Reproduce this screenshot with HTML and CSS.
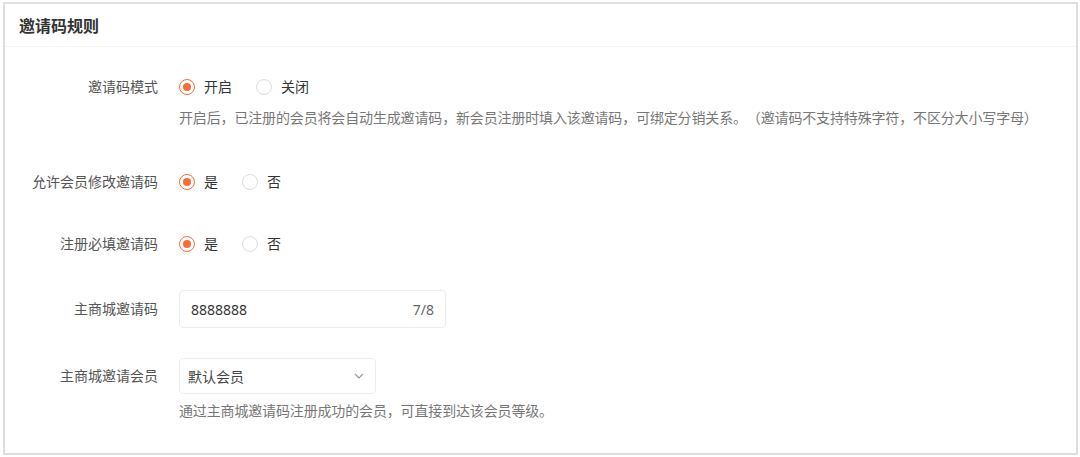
FILE: index.html
```html
<!DOCTYPE html>
<html lang="zh-CN">
<head>
<meta charset="utf-8">
<title>邀请码规则</title>
<link rel="stylesheet" href="styles.css">
</head>
<body>
<div class="card">
  <div class="card-header">邀请码规则</div>
  <div class="form">
    <div class="item item-help">
      <div class="row">
        <div class="label">邀请码模式</div>
        <div class="control">
          <label class="radio"><span class="dot checked"></span><span class="rtext">开启</span></label>
          <label class="radio"><span class="dot"></span><span class="rtext">关闭</span></label>
        </div>
      </div>
      <div class="help">开启后，已注册的会员将会自动生成邀请码，新会员注册时填入该邀请码，可绑定分销关系。（邀请码不支持特殊字符，不区分大小写字母）</div>
    </div>
    <div class="item">
      <div class="row">
        <div class="label">允许会员修改邀请码</div>
        <div class="control">
          <label class="radio"><span class="dot checked"></span><span class="rtext">是</span></label>
          <label class="radio"><span class="dot"></span><span class="rtext">否</span></label>
        </div>
      </div>
    </div>
    <div class="item">
      <div class="row">
        <div class="label">注册必填邀请码</div>
        <div class="control">
          <label class="radio"><span class="dot checked"></span><span class="rtext">是</span></label>
          <label class="radio"><span class="dot"></span><span class="rtext">否</span></label>
        </div>
      </div>
    </div>
    <div class="item">
      <div class="row">
        <div class="label">主商城邀请码</div>
        <div class="control">
          <div class="input">
            <span class="value">8888888</span>
            <span class="count">7/8</span>
          </div>
        </div>
      </div>
    </div>
    <div class="item">
      <div class="row">
        <div class="label">主商城邀请会员</div>
        <div class="control">
          <div class="select">
            <span class="value">默认会员</span>
            <svg class="chev" width="10" height="6" viewBox="0 0 10 6"><path d="M1 1 L5 5 L9 1" fill="none" stroke="#9a9a9a" stroke-width="1.2"/></svg>
          </div>
        </div>
      </div>
      <div class="help">通过主商城邀请码注册成功的会员，可直接到达该会员等级。</div>
    </div>
  </div>
</div>
</body>
</html>
```

FILE: styles.css
```css
* { box-sizing: border-box; }
html, body { margin: 0; padding: 0; background: #ffffff; }
body {
  font-family: "Noto Sans", "Noto Sans CJK SC", sans-serif;
  font-size: 14px;
  color: #333;
  text-spacing-trim: space-all;
}
.card {
  margin: 2px 0 0 3px;
  width: 1075px;
  height: 453px;
  border: 2px solid #dedede;
  background: #fff;
}
.card-header {
  height: 43px;
  line-height: 44px;
  padding-left: 14px;
  font-size: 16px;
  font-weight: 700;
  color: #333;
  border-bottom: 1px solid #f6f4f0;
}
.form {
  display: flex;
  flex-direction: column;
  gap: 30px;
  padding-top: 24px;
}
.row {
  display: flex;
  align-items: center;
  min-height: 32px;
}
.label {
  width: 153px;
  text-align: right;
  color: #555;
  line-height: 20px;
  flex-shrink: 0;
}
.control {
  margin-left: 21px;
  display: flex;
  align-items: center;
}
.radio {
  display: flex;
  align-items: center;
  margin-right: 24px;
  color: #333;
  line-height: 20px;
}
.dot {
  width: 16px;
  height: 16px;
  border-radius: 50%;
  border: 1px solid #dcdcdc;
  display: inline-flex;
  align-items: center;
  justify-content: center;
  margin-right: 9px;
}
.dot.checked { border-color: #f46d3b; }
.dot.checked::after {
  content: "";
  width: 8px;
  height: 8px;
  border-radius: 50%;
  background: #f46d3b;
}
.help {
  margin: 5px 0 0 174px;
  line-height: 20px;
  color: #777;
  letter-spacing: -0.15px;
}
.item-help .help { margin-bottom: 8px; }
.input {
  width: 267px;
  height: 38px;
  border: 1px solid #ececec;
  border-radius: 4px;
  display: flex;
  align-items: center;
  justify-content: space-between;
  padding: 0 11px 0 11px;
}
.input .value { color: #333; }
.input .count { color: #666; }
.select {
  width: 197px;
  height: 36px;
  border: 1px solid #ececec;
  border-radius: 4px;
  display: flex;
  align-items: center;
  justify-content: space-between;
  padding: 0 11px 0 8px;
}
.select .value { color: #444; }
.item:last-child .help { margin-top: 7px; }
```
